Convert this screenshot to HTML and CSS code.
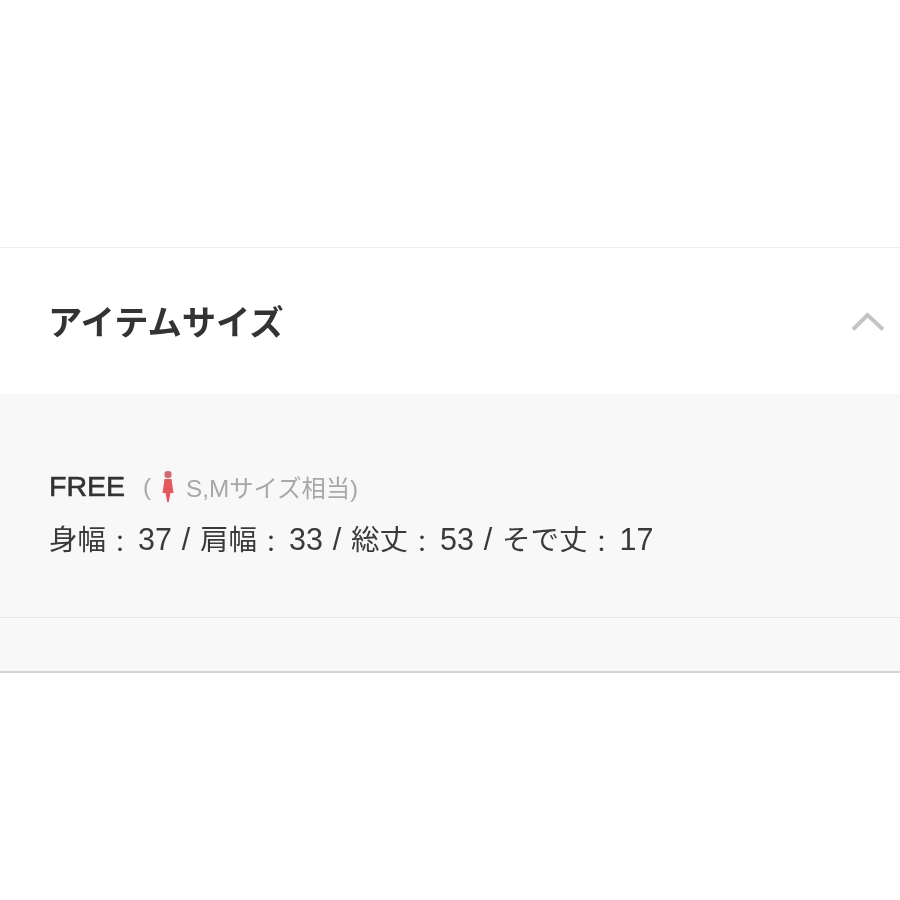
FILE: index.html
```html
<!DOCTYPE html>
<html lang="ja">
<head>
<meta charset="utf-8">
<title>アイテムサイズ</title>
<link rel="stylesheet" href="styles.css">
</head>
<body>
<div class="spacer-top"></div>
<section class="accordion">
  <header class="accordion-head">
    <h2 class="accordion-title">アイテムサイズ</h2>
    <svg class="chevron" width="36" height="20" viewBox="0 0 36 20" aria-hidden="true"><path d="M3 17.500 L17.500 3 L33 17.500" fill="none" stroke="#c4c4c4" stroke-width="4"/></svg>
  </header>
  <div class="panel">
    <div class="size-block">
      <div class="size-name">
        <span class="size-label">FREE</span>
        <span class="size-note">
          <span class="paren">(</span>
          <svg class="person" width="14" height="34" viewBox="0 0 14 34" aria-hidden="true"><rect x="3.400" y="2" width="7.200" height="7" rx="3" fill="#cf6a70"/><path d="M3.500 10 H10.500 L12.500 24 H9.500 L7.800 33 H6.200 L4.500 24 H1.500 Z" fill="#e4575f"/></svg>
          <span class="note-text">S,Mサイズ相当)</span>
        </span>
      </div>
      <p class="size-values"><span class="cjk">身幅</span><span class="colon">：</span>37 / <span class="cjk">肩幅</span><span class="colon">：</span>33 / <span class="cjk">総丈</span><span class="colon">：</span>53 / <span class="cjk">そで丈</span><span class="colon">：</span>17</p>
    </div>
    <div class="panel-foot"></div>
  </div>
</section>
</body>
</html>
```
FILE: styles.css
```css
html, body {
  margin: 0;
  padding: 0;
  background: #fff;
}
body {
  font-family: "Liberation Sans", "Noto Sans CJK JP", sans-serif;
  color: #333;
}
.spacer-top {
  height: 247px;
}
.accordion {
  border-top: 1px solid #efefef;
  border-bottom: 2px solid #d4d4d4;
  filter: blur(0.4px);
}
.accordion-head {
  height: 146px;
  box-sizing: border-box;
  display: flex;
  align-items: center;
  justify-content: space-between;
  padding: 0 14px 0 48px;
}
.accordion-title {
  margin: 5px 0 0;
  font-size: 34.3px;
  font-weight: 700;
  line-height: 1.2;
  color: #333;
}
.chevron {
  display: block;
  margin-top: 2px;
}
.panel {
  background: #f8f8f8;
}
.size-block {
  height: 224px;
  box-sizing: border-box;
  padding: 71px 48px 0;
  border-bottom: 1px solid #e8e8e8;
}
.size-name {
  display: flex;
  align-items: center;
  height: 42px;
}
.size-label {
  font-size: 28.5px;
  font-weight: 400;
  -webkit-text-stroke: 0.6px #333;
  color: #333;
  margin: 0 0 0 1px;
  width: 94px;
}
.size-note {
  display: flex;
  align-items: center;
  gap: 10px;
  font-size: 24.3px;
  color: #a8a8a8;
  margin-top: 1px;
}
.paren {
  display: block;
}
.person {
  display: block;
  margin-top: -1px;
}
.note-text {
  margin-left: 1px;
}
.size-values {
  margin: 11px 0 0 1px;
  font-size: 30.5px;
  word-spacing: 1.300px;
  line-height: 42px;
  color: #3a3a3a;
  white-space: nowrap;
}
.cjk {
  font-size: 28.5px;
}
.colon {
  font-size: 24px;
  line-height: 1;
  vertical-align: -2px;
  margin: 0 6px 0 2px;
}
.panel-foot {
  height: 53px;
}
```
